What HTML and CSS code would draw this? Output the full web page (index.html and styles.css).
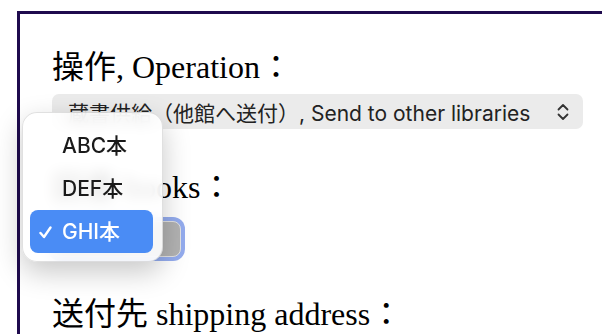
FILE: index.html
```html
<!DOCTYPE html>
<html lang="ja">
<head>
    <meta charset="UTF-8">
    <meta name="viewport" content="width=device-width, initial-scale=1.0">
    <title>送付依頼</title>
    <link rel="stylesheet" href="styles.css">
</head>
<body>
    <div class="panel">
        <!-- 操作 -->
        <div class="label first">操作, Operation：</div>
        <div class="select wide">
            <span class="select-text">蔵書供給（他館へ送付）, Send to other libraries</span>
            <svg class="chevron" width="12" height="18" viewBox="0 0 12 18">
                <path d="M1.5 6.5 L6 2 L10.5 6.5" />
                <path d="M1.5 11.5 L6 16 L10.5 11.5" />
            </svg>
        </div>

        <!-- 図書 -->
        <div class="label second">図書 books：</div>
        <div class="select small active">
            <span class="select-text">GHI本</span>
        </div>

        <!-- 送付先 -->
        <div class="label third">送付先 shipping address：</div>
    </div>

    <!-- open dropdown of the books select -->
    <div class="menu">
        <div class="menu-item">ABC本</div>
        <div class="menu-item">DEF本</div>
        <div class="menu-item selected">
            <svg class="check" width="13" height="13" viewBox="0 0 13 13">
                <path d="M1.5 7 L5 11 L11.5 1.5" />
            </svg>GHI本
        </div>
    </div>
</body>
</html>
```

FILE: styles.css
```css
html, body {
    height: 100%;
    overflow: hidden;
}
body {
    margin: 0;
    background-color: #fff;
    font-family: "Liberation Serif", "Noto Sans CJK JP", serif;
    color: #000;
}
.panel {
    margin: 11px 0 0 17px;
    padding: 0 0 0 32px;
    border: 3px solid #1f0b4e;
    border-right: none;
    border-bottom: none;
    height: 320px;
    overflow: hidden;
}
.label {
    font-size: 32px;
    line-height: 40px;
    height: 40px;
    white-space: nowrap;
}
.label.first {
    margin-top: 33px;
}
.label.second {
    margin-top: 38px;
}
.label.third {
    margin-top: 37px;
}
.select {
    display: flex;
    align-items: center;
    box-sizing: border-box;
    height: 35px;
    border-radius: 7px;
    background-color: #ebebeb;
    font-family: "Inter", "Liberation Sans", "Noto Sans CJK JP", sans-serif;
    font-size: 21px;
    color: #222;
    white-space: nowrap;
}
.select.wide {
    width: 531px;
    margin-top: 7px;
    padding: 0 14px 0 16px;
    justify-content: space-between;
}
.select.small {
    width: 129px;
    height: 36px;
    margin-top: 14px;
    padding-left: 16px;
}
.select.active {
    background-color: #b2b2b2;
    border: 1px solid #e2e2e2;
    border-radius: 8px;
    box-shadow: 0 0 0 4px #94acee;
}
.chevron {
    fill: none;
    stroke: #333;
    stroke-width: 1.8;
    stroke-linecap: round;
    stroke-linejoin: round;
}
.menu {
    position: absolute;
    left: 22px;
    top: 112px;
    width: 141px;
    height: 150px;
    box-sizing: border-box;
    padding: 11px 9px 8px 7px;
    border: 1px solid rgba(0, 0, 0, 0.12);
    border-radius: 15px;
    background-color: rgba(255, 255, 255, 0.88);
    backdrop-filter: blur(7px);
    box-shadow: 0 10px 28px rgba(0, 0, 0, 0.22);
    font-family: "Inter", "Liberation Sans", "Noto Sans CJK JP", sans-serif;
    font-size: 21px;
    font-weight: 500;
    color: #1a1a1a;
}
.menu-item {
    position: relative;
    height: 43px;
    line-height: 43px;
    padding-left: 32px;
    border-radius: 8px;
}
.menu-item.selected {
    background-color: #4a8cf5;
    color: #fff;
}
.check {
    position: absolute;
    left: 9px;
    top: 16px;
    fill: none;
    stroke: #fff;
    stroke-width: 2.4;
    stroke-linecap: round;
    stroke-linejoin: round;
}
```
